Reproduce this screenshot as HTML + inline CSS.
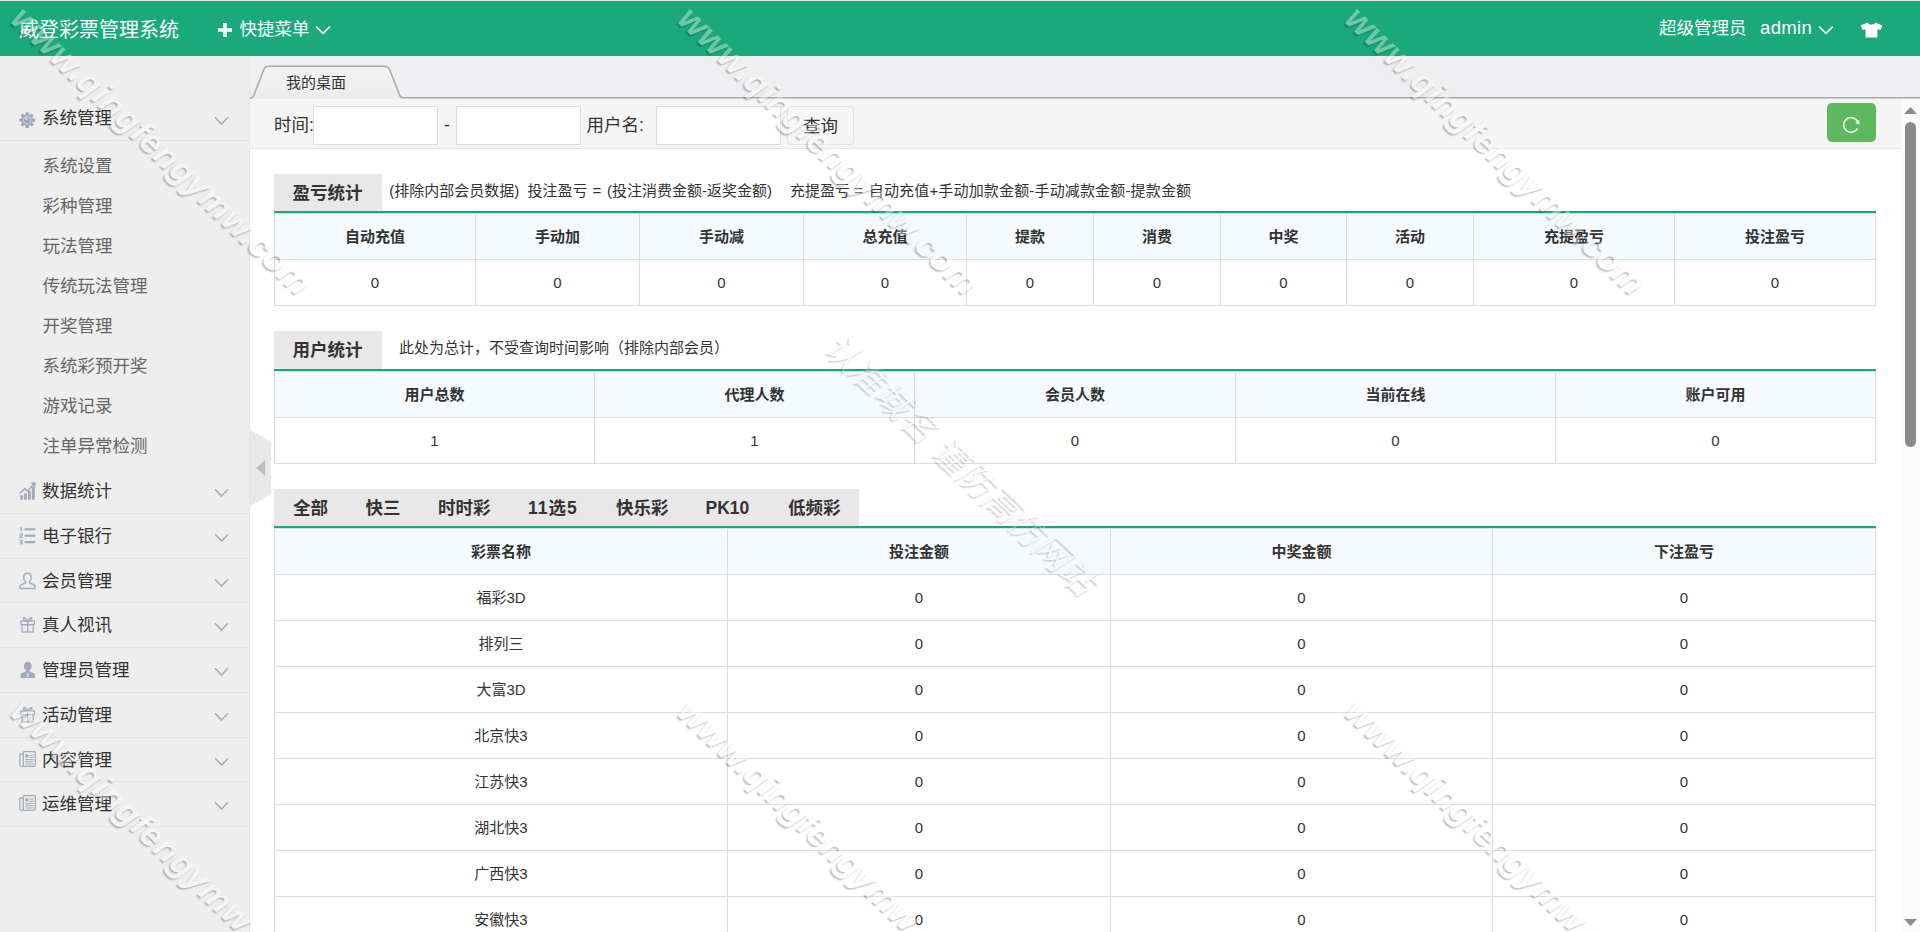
<!DOCTYPE html>
<html lang="zh-CN">
<head>
<meta charset="utf-8">
<title>威登彩票管理系统</title>
<style>
*{box-sizing:border-box;margin:0;padding:0}
html,body{width:1920px;height:932px;overflow:hidden;background:#fff}
body{font-family:"Liberation Sans","Noto Sans CJK SC",sans-serif;color:#333;font-size:17.5px;position:relative}
.abs{position:absolute}
#hdr{position:absolute;left:0;top:0;width:1920px;height:56px;background:#1aa97b;border-top:1px solid #e2e4e2}
#hdr .t{position:absolute;color:#fff;white-space:nowrap}
#side{position:absolute;left:0;top:56px;width:250px;height:876px;background:#eeeeee;border-right:1px solid #e5e5e5}
.dt{position:absolute;left:0;width:249px;height:44.75px;border-bottom:1px solid #e5e5e5;font-size:17.5px;line-height:44.5px;color:#333;padding-left:42px;white-space:nowrap}
.dt svg.ic{position:absolute;left:19px;top:13px}
.dt:first-child svg.ic{top:15.800px}
.dt:first-child svg.ch{top:20.300px}
.dt svg.ch{position:absolute;left:214.300px;top:19px}
.li{position:absolute;left:42.5px;font-size:17.5px;line-height:42px;height:40px;color:#666;white-space:nowrap}
#tabbar{position:absolute;left:250px;top:56px;width:1670px;height:43px;background:#efeef0}
#fbar{position:absolute;left:250px;top:99px;width:1651px;height:50px;background:#f5f5f5;border-bottom:1px solid #e5e5e5}
#fbar .lb{position:absolute;top:0;line-height:52px;font-size:17.5px;white-space:nowrap;color:#333}
#fbar .in{position:absolute;top:7px;height:39px;width:125px;background:#fff;border:1px solid #ddd}
#sb{position:absolute;left:1901px;top:99px;width:19px;height:833px;background:#fbfbfb}
.stab{position:absolute;background:#e8e8e8;font-weight:bold;font-size:17.5px;line-height:39.5px;height:37px;white-space:nowrap;color:#333}
.gl{position:absolute;left:274px;width:1602px;height:2px;background:#17a879}
.desc{position:absolute;font-size:15px;white-space:nowrap;color:#333;line-height:20px}
.c{position:absolute;border-right:1px solid #ddd;border-bottom:1px solid #ddd;text-align:center;font-size:15px;white-space:nowrap;color:#333}
.c.h{background:#f5fafe;font-weight:bold;border-top:1px solid #ddd}
.c.l{border-left:1px solid #ddd}
.wm{position:absolute;white-space:nowrap;font-style:italic;font-weight:bold;line-height:1;font-family:"Liberation Sans","Noto Sans CJK SC",sans-serif;color:#fff;opacity:.36;text-shadow:0 2px 1.5px rgba(0,0,0,.7);transform-origin:0 0;transform:rotate(43.7deg);pointer-events:none;z-index:50}
</style>
</head>
<body>
<div id="hdr">
<span class="t" style="left:19px;top:0.5px;line-height:56px;font-size:20px">威登彩票管理系统</span>
<svg class="abs" style="left:217px;top:21.200px" width="16" height="16" viewBox="0 0 16 16"><path d="M6.2 1h3.6v5.2H15v3.6H9.8V15H6.2V9.8H1V6.2h5.2z" fill="#fff"/></svg>
<span class="t" style="left:239.5px;top:0;line-height:56px;font-size:17.5px">快捷菜单</span>
<svg class="abs" style="left:315px;top:24.200px" width="16" height="10" viewBox="0 0 16 10"><path d="M1.2 1.6L8 8.4l6.8-6.8" fill="none" stroke="#fff" stroke-width="1.6"/></svg>
<span class="t" style="left:1659px;top:-1px;line-height:56px;font-size:17.5px">超级管理员</span>
<span class="t" style="left:1760px;top:-1px;line-height:56px;font-size:18.5px;letter-spacing:.35px">admin</span>
<svg class="abs" style="left:1818px;top:24.200px" width="16" height="10" viewBox="0 0 16 10"><path d="M1.2 1.6L8 8.4l6.8-6.8" fill="none" stroke="#fff" stroke-width="1.6"/></svg>
<svg class="abs" style="left:1860px;top:20.800px" width="23" height="16" preserveAspectRatio="none" viewBox="0 0 23 17"><path d="M7.6 .6c.9 1.6 2.3 2.4 3.9 2.4s3-.8 3.9-2.4L22.4 3.8 20.4 8.6l-3-1V16.4H5.6V7.6l-3 1L.6 3.8z" fill="#fff"/></svg>
</div>
<div id="side">
<div class="dt" style="top:40px"><svg class="ic" style="left:19.300px" width="16.400" height="16.200" viewBox="0 0 17 17"><g fill="#a2abbd"><circle cx="8.5" cy="8.5" r="6.1"/><rect x="6.700" y="0.200" width="3.600" height="16.600" rx=".9"/><rect x="0.200" y="6.700" width="16.600" height="3.600" rx=".9"/><g transform="rotate(45 8.5 8.5)"><rect x="6.700" y="0.200" width="3.600" height="16.600" rx=".9"/><rect x="0.200" y="6.700" width="16.600" height="3.600" rx=".9"/></g></g><circle cx="8.5" cy="8.5" r="4.1" fill="none" stroke="#eee" stroke-width=".7" opacity=".75"/><path d="M6.300 6.200a2.300 2.300 0 0 1 3 .3l-1.300 1.300-1.600.1z" fill="#eee" opacity=".8"/></svg>系统管理<svg class="ch" width="15" height="10" viewBox="0 0 15 10"><path d="M1 1.300l6.500 6.800 6.500-6.800" fill="none" stroke="#acacac" stroke-width="1.5"/></svg></div>
<div class="li" style="top:89.25px">系统设置</div>
<div class="li" style="top:129.25px">彩种管理</div>
<div class="li" style="top:169.25px">玩法管理</div>
<div class="li" style="top:209.25px">传统玩法管理</div>
<div class="li" style="top:249.25px">开奖管理</div>
<div class="li" style="top:289.25px">系统彩预开奖</div>
<div class="li" style="top:329.25px">游戏记录</div>
<div class="li" style="top:369.25px">注单异常检测</div>
<div class="dt" style="top:413.0px"><svg class="ic" width="17" height="18" viewBox="0 0 17 18"><g fill="#a2abbd"><rect x="1.200" y="13.300" width="2.900" height="4.400"/><rect x="5.100" y="11.300" width="2.900" height="6.400"/><rect x="9" y="8.800" width="2.900" height="8.900"/><rect x="12.900" y="5" width="2.900" height="12.700"/></g><path d="M.8 11.400l5-4.800 2.600 2.400 6-6.200" fill="none" stroke="#a2abbd" stroke-width="1.700"/><path d="M11.300 .6h5.200v5.200z" fill="#a2abbd"/></svg>数据统计<svg class="ch" width="15" height="10" viewBox="0 0 15 10"><path d="M1 1.300l6.500 6.800 6.500-6.800" fill="none" stroke="#acacac" stroke-width="1.5"/></svg></div>
<div class="dt" style="top:457.75px"><svg class="ic" width="17" height="18" viewBox="0 0 17 18"><g fill="#a2abbd"><rect x="5.5" y="1.2" width="11" height="2.2"/><rect x="5.5" y="7.6" width="11" height="2.2"/><rect x="5.5" y="14" width="11" height="2.2"/><rect x="1.6" y="0.5" width="1.3" height="4"/><rect x="0.6" y="0.5" width="2" height="1"/><rect x="0.6" y="6.5" width="3" height="1"/><rect x="2.4" y="6.5" width="1.2" height="2.4"/><rect x="0.6" y="8.4" width="3" height="1"/><rect x="0.6" y="8.4" width="1.2" height="2.4"/><rect x="0.6" y="10" width="3" height="1"/><rect x="0.6" y="12.8" width="3" height="1"/><rect x="2.4" y="12.8" width="1.2" height="4.4"/><rect x="0.6" y="14.6" width="3" height="1"/><rect x="0.6" y="16.3" width="3" height="1"/></g></svg>电子银行<svg class="ch" width="15" height="10" viewBox="0 0 15 10"><path d="M1 1.300l6.500 6.800 6.500-6.800" fill="none" stroke="#acacac" stroke-width="1.5"/></svg></div>
<div class="dt" style="top:502.5px"><svg class="ic" width="17" height="18" viewBox="0 0 17 18"><path d="M8.5 1.2c2.3 0 3.8 1.7 3.8 4.2 0 1.7-.8 3.3-1.9 4.2v1.2l4.3 1.8c.9.4 1.3 1.1 1.3 2v1.9H1V14.600c0-.9.4-1.600 1.300-2l4.300-1.800V9.600C5.500 8.700 4.700 7.100 4.700 5.400c0-2.500 1.500-4.200 3.800-4.200z" fill="none" stroke="#a2abbd" stroke-width="1.4" stroke-linejoin="round"/></svg>会员管理<svg class="ch" width="15" height="10" viewBox="0 0 15 10"><path d="M1 1.300l6.500 6.800 6.500-6.800" fill="none" stroke="#acacac" stroke-width="1.5"/></svg></div>
<div class="dt" style="top:547.25px"><svg class="ic" style="left:19.800px" width="15.400" height="17" viewBox="0 0 16 17" preserveAspectRatio="none"><g fill="none" stroke="#a2abbd" stroke-width="1.3"><rect x="1" y="5" width="14" height="3.6"/><rect x="2.2" y="8.600" width="11.600" height="7.400"/><path d="M8 5v11"/><path d="M8 5C6 1.500 3.800 .8 3.600 2.500 3.400 4.200 6 4.800 8 5zM8 5c2-3.500 4.200-4.200 4.400-2.500C12.600 4.200 10 4.800 8 5z"/></g></svg>真人视讯<svg class="ch" width="15" height="10" viewBox="0 0 15 10"><path d="M1 1.300l6.500 6.800 6.500-6.800" fill="none" stroke="#acacac" stroke-width="1.5"/></svg></div>
<div class="dt" style="top:592.0px"><svg class="ic" style="left:20px" width="15.500" height="18" viewBox="0 0 16 18" preserveAspectRatio="none"><path d="M8 .8c2.400 0 4 1.800 4 4.300 0 1.800-.8 3.400-2 4.300v1.200l4 1.500c1 .4 1.500 1.200 1.500 2.200v1.600c0 .6-.4 1-1 1H1.500c-.6 0-1-.4-1-1v-1.600c0-1 .5-1.800 1.500-2.200l4-1.500V9.400C4.800 8.500 4 6.900 4 5.100 4 2.600 5.600.8 8 .8z" fill="#a2abbd"/><path d="M7.400 12h1.200l.5 3.600L8 16.600l-1.100-1z" fill="#eee" opacity=".7"/></svg>管理员管理<svg class="ch" width="15" height="10" viewBox="0 0 15 10"><path d="M1 1.300l6.500 6.800 6.500-6.800" fill="none" stroke="#acacac" stroke-width="1.5"/></svg></div>
<div class="dt" style="top:636.75px"><svg class="ic" style="left:19.800px" width="15.400" height="17" viewBox="0 0 16 17" preserveAspectRatio="none"><g fill="none" stroke="#a2abbd" stroke-width="1.3"><rect x="1" y="5" width="14" height="3.6"/><rect x="2.2" y="8.600" width="11.600" height="7.400"/><path d="M8 5v11"/><path d="M8 5C6 1.500 3.800 .8 3.600 2.500 3.400 4.200 6 4.800 8 5zM8 5c2-3.500 4.200-4.200 4.400-2.500C12.600 4.200 10 4.800 8 5z"/></g></svg>活动管理<svg class="ch" width="15" height="10" viewBox="0 0 15 10"><path d="M1 1.300l6.500 6.800 6.500-6.800" fill="none" stroke="#acacac" stroke-width="1.5"/></svg></div>
<div class="dt" style="top:681.5px"><svg class="ic" width="17" height="16" viewBox="0 0 17 16"><g fill="none" stroke="#a2abbd" stroke-width="1.300"><path d="M4.300 3H1.800C1.200 3 .8 3.400.8 4v9.800c0 .8.600 1.500 1.500 1.500h12.400c.9 0 1.600-.7 1.600-1.600V1.600c0-.5-.4-.9-.9-.9H5.200c-.5 0-.9.400-.9.900v12.300c0 .8-.6 1.400-1.400 1.400"/><path d="M10.500 4.200h4M10.500 6.400h4M6.300 8.600h8.200M6.300 10.800h8.200M6.300 13h8.200" stroke-width="1"/></g><rect x="6.300" y="3.200" width="3" height="3.400" fill="#a2abbd"/></svg>内容管理<svg class="ch" width="15" height="10" viewBox="0 0 15 10"><path d="M1 1.300l6.500 6.800 6.500-6.800" fill="none" stroke="#acacac" stroke-width="1.5"/></svg></div>
<div class="dt" style="top:726.25px"><svg class="ic" width="17" height="16" viewBox="0 0 17 16"><g fill="none" stroke="#a2abbd" stroke-width="1.300"><path d="M4.300 3H1.800C1.200 3 .8 3.400.8 4v9.800c0 .8.600 1.500 1.500 1.500h12.400c.9 0 1.600-.7 1.600-1.600V1.600c0-.5-.4-.9-.9-.9H5.200c-.5 0-.9.400-.9.900v12.300c0 .8-.6 1.400-1.400 1.400"/><path d="M10.500 4.200h4M10.500 6.400h4M6.300 8.600h8.200M6.300 10.800h8.200M6.300 13h8.200" stroke-width="1"/></g><rect x="6.300" y="3.200" width="3" height="3.400" fill="#a2abbd"/></svg>运维管理<svg class="ch" width="15" height="10" viewBox="0 0 15 10"><path d="M1 1.300l6.500 6.800 6.500-6.800" fill="none" stroke="#acacac" stroke-width="1.5"/></svg></div>
</div>
<svg class="abs" style="left:250px;top:430px;z-index:5" width="22" height="76" viewBox="0 0 22 76"><path d="M0 0L19.500 10.500Q21.200 11.500 21.200 13.500V62.500Q21.200 64.500 19.500 65.500L0 76z" fill="#e9e9e9"/><path d="M6.200 38l9-8v16z" fill="#bdbdbd"/></svg>
<div id="tabbar">
<svg class="abs" style="left:0;top:0" width="1670" height="43" viewBox="0 0 1670 43"><defs><linearGradient id="tg" x1="0" y1="0" x2="0" y2="1"><stop offset="0" stop-color="#f3f3f3"/><stop offset="1" stop-color="#ececec"/></linearGradient></defs><path d="M0 42.300Q2.800 41.900 4 39L13.800 13.500C14.800 11 16.300 10.200 19.300 10.200H134C137 10.200 138.600 11 139.600 13.500L149.500 39Q150.600 41.700 153.300 41.700H1670V43H0z" fill="url(#tg)"/><path d="M0 42.300Q2.800 41.900 4 39L13.800 13.500C14.800 11 16.300 10.200 19.300 10.200H134C137 10.200 138.600 11 139.600 13.500L149.500 39Q150.600 41.700 153.300 41.700H1670" fill="none" stroke="#ababab" stroke-width="1.600"/></svg>
<span class="abs" style="left:36px;top:10px;line-height:33px;font-size:15px;color:#333;white-space:nowrap">我的桌面</span>
</div>
<div id="fbar">
<span class="lb" style="left:24px">时间:</span>
<span class="in" style="left:63px"></span>
<span class="lb" style="left:194px">-</span>
<span class="in" style="left:206px"></span>
<span class="lb" style="left:336.500px">用户名:</span>
<span class="in" style="left:406px"></span>
<span class="in" style="left:537px;width:67px;border-radius:4px;background:#f5f5f5;border-color:#e2e2e2;text-align:center;line-height:38px;font-size:17.5px;color:#333">查询</span>
<span class="abs" style="left:1577px;top:4px;width:49px;height:39px;background:#5eb95e;border-radius:5px"></span>
<svg class="abs" style="left:1591px;top:16px" width="20" height="20" viewBox="0 0 20 20"><path d="M16.500 13.200A7.300 7.300 0 1 1 16.900 7.600" fill="none" stroke="#fff" stroke-width="1.400"/><path d="M14.300 8.200l4.300 1.300-.6-4.400z" fill="#fff"/></svg>
</div>
<div id="sb">
<svg class="abs" style="left:0;top:0" width="19" height="833" viewBox="0 0 19 833"><path d="M3 15h13l-6.500-7z" fill="#8b8b8b"/><rect x="4" y="23" width="11" height="325" rx="5.500" fill="#8b8b8b"/><path d="M3 820h13l-6.500 7z" fill="#8b8b8b"/></svg>
</div>
<div class="stab" style="left:274px;top:174px;width:108px;padding-left:18.500px">盈亏统计</div>
<span class="desc" style="left:389.2px;top:180.5px">(排除内部会员数据)</span>
<span class="desc" style="left:527.5px;top:180.5px">投注盈亏</span>
<span class="desc" style="left:592.5px;top:180.5px">=</span>
<span class="desc" style="left:607px;top:180.5px">(投注消费金额-返奖金额)</span>
<span class="desc" style="left:790px;top:180.5px">充提盈亏</span>
<span class="desc" style="left:854px;top:180.5px">=</span>
<span class="desc" style="left:868.8px;top:180.5px;letter-spacing:.16px">自动充值+手动加款金额-手动减款金额-提款金额</span>
<div class="gl" style="top:211px"></div>
<div class="c h l" style="left:274px;top:213px;width:202px;height:47px;line-height:46px">自动充值</div>
<div class="c h" style="left:476px;top:213px;width:164px;height:47px;line-height:46px">手动加</div>
<div class="c h" style="left:640px;top:213px;width:164px;height:47px;line-height:46px">手动减</div>
<div class="c h" style="left:804px;top:213px;width:163px;height:47px;line-height:46px">总充值</div>
<div class="c h" style="left:967px;top:213px;width:127px;height:47px;line-height:46px">提款</div>
<div class="c h" style="left:1094px;top:213px;width:127px;height:47px;line-height:46px">消费</div>
<div class="c h" style="left:1221px;top:213px;width:126px;height:47px;line-height:46px">中奖</div>
<div class="c h" style="left:1347px;top:213px;width:127px;height:47px;line-height:46px">活动</div>
<div class="c h" style="left:1474px;top:213px;width:201px;height:47px;line-height:46px">充提盈亏</div>
<div class="c h" style="left:1675px;top:213px;width:201px;height:47px;line-height:46px">投注盈亏</div>
<div class="c l" style="left:274px;top:260px;width:202px;height:46px;line-height:46px">0</div>
<div class="c" style="left:476px;top:260px;width:164px;height:46px;line-height:46px">0</div>
<div class="c" style="left:640px;top:260px;width:164px;height:46px;line-height:46px">0</div>
<div class="c" style="left:804px;top:260px;width:163px;height:46px;line-height:46px">0</div>
<div class="c" style="left:967px;top:260px;width:127px;height:46px;line-height:46px">0</div>
<div class="c" style="left:1094px;top:260px;width:127px;height:46px;line-height:46px">0</div>
<div class="c" style="left:1221px;top:260px;width:126px;height:46px;line-height:46px">0</div>
<div class="c" style="left:1347px;top:260px;width:127px;height:46px;line-height:46px">0</div>
<div class="c" style="left:1474px;top:260px;width:201px;height:46px;line-height:46px">0</div>
<div class="c" style="left:1675px;top:260px;width:201px;height:46px;line-height:46px">0</div>
<div class="stab" style="left:274px;top:331px;height:38px;width:108px;padding-left:18.500px">用户统计</div>
<div class="desc" style="left:399px;top:337.5px">此处为总计，不受查询时间影响（排除内部会员）</div>
<div class="gl" style="top:369px"></div>
<div class="c h l" style="left:274px;top:371px;width:321px;height:47px;line-height:46px">用户总数</div>
<div class="c h" style="left:595px;top:371px;width:320px;height:47px;line-height:46px">代理人数</div>
<div class="c h" style="left:915px;top:371px;width:321px;height:47px;line-height:46px">会员人数</div>
<div class="c h" style="left:1236px;top:371px;width:320px;height:47px;line-height:46px">当前在线</div>
<div class="c h" style="left:1556px;top:371px;width:320px;height:47px;line-height:46px">账户可用</div>
<div class="c l" style="left:274px;top:418px;width:321px;height:46px;line-height:46px">1</div>
<div class="c" style="left:595px;top:418px;width:320px;height:46px;line-height:46px">1</div>
<div class="c" style="left:915px;top:418px;width:321px;height:46px;line-height:46px">0</div>
<div class="c" style="left:1236px;top:418px;width:320px;height:46px;line-height:46px">0</div>
<div class="c" style="left:1556px;top:418px;width:320px;height:46px;line-height:46px">0</div>
<div class="stab" style="left:274px;top:489px;width:585px"><span style="position:absolute;left:19px;top:0">全部</span><span style="position:absolute;left:91.5px;top:0">快三</span><span style="position:absolute;left:164px;top:0">时时彩</span><span style="position:absolute;left:254px;top:0;letter-spacing:1px">11选5</span><span style="position:absolute;left:342px;top:0">快乐彩</span><span style="position:absolute;left:431.5px;top:0">PK10</span><span style="position:absolute;left:514px;top:0">低频彩</span></div>
<div class="gl" style="top:526px"></div>
<div class="c h l" style="left:274px;top:528px;width:454px;height:47px;line-height:46px">彩票名称</div>
<div class="c h" style="left:728px;top:528px;width:383px;height:47px;line-height:46px">投注金额</div>
<div class="c h" style="left:1111px;top:528px;width:382px;height:47px;line-height:46px">中奖金额</div>
<div class="c h" style="left:1493px;top:528px;width:383px;height:47px;line-height:46px">下注盈亏</div>
<div class="c l" style="left:274px;top:575px;width:454px;height:46px;line-height:46px">福彩3D</div>
<div class="c" style="left:728px;top:575px;width:383px;height:46px;line-height:46px">0</div>
<div class="c" style="left:1111px;top:575px;width:382px;height:46px;line-height:46px">0</div>
<div class="c" style="left:1493px;top:575px;width:383px;height:46px;line-height:46px">0</div>
<div class="c l" style="left:274px;top:621px;width:454px;height:46px;line-height:46px">排列三</div>
<div class="c" style="left:728px;top:621px;width:383px;height:46px;line-height:46px">0</div>
<div class="c" style="left:1111px;top:621px;width:382px;height:46px;line-height:46px">0</div>
<div class="c" style="left:1493px;top:621px;width:383px;height:46px;line-height:46px">0</div>
<div class="c l" style="left:274px;top:667px;width:454px;height:46px;line-height:46px">大富3D</div>
<div class="c" style="left:728px;top:667px;width:383px;height:46px;line-height:46px">0</div>
<div class="c" style="left:1111px;top:667px;width:382px;height:46px;line-height:46px">0</div>
<div class="c" style="left:1493px;top:667px;width:383px;height:46px;line-height:46px">0</div>
<div class="c l" style="left:274px;top:713px;width:454px;height:46px;line-height:46px">北京快3</div>
<div class="c" style="left:728px;top:713px;width:383px;height:46px;line-height:46px">0</div>
<div class="c" style="left:1111px;top:713px;width:382px;height:46px;line-height:46px">0</div>
<div class="c" style="left:1493px;top:713px;width:383px;height:46px;line-height:46px">0</div>
<div class="c l" style="left:274px;top:759px;width:454px;height:46px;line-height:46px">江苏快3</div>
<div class="c" style="left:728px;top:759px;width:383px;height:46px;line-height:46px">0</div>
<div class="c" style="left:1111px;top:759px;width:382px;height:46px;line-height:46px">0</div>
<div class="c" style="left:1493px;top:759px;width:383px;height:46px;line-height:46px">0</div>
<div class="c l" style="left:274px;top:805px;width:454px;height:46px;line-height:46px">湖北快3</div>
<div class="c" style="left:728px;top:805px;width:383px;height:46px;line-height:46px">0</div>
<div class="c" style="left:1111px;top:805px;width:382px;height:46px;line-height:46px">0</div>
<div class="c" style="left:1493px;top:805px;width:383px;height:46px;line-height:46px">0</div>
<div class="c l" style="left:274px;top:851px;width:454px;height:46px;line-height:46px">广西快3</div>
<div class="c" style="left:728px;top:851px;width:383px;height:46px;line-height:46px">0</div>
<div class="c" style="left:1111px;top:851px;width:382px;height:46px;line-height:46px">0</div>
<div class="c" style="left:1493px;top:851px;width:383px;height:46px;line-height:46px">0</div>
<div class="c l" style="left:274px;top:897px;width:454px;height:46px;line-height:46px">安徽快3</div>
<div class="c" style="left:728px;top:897px;width:383px;height:46px;line-height:46px">0</div>
<div class="c" style="left:1111px;top:897px;width:382px;height:46px;line-height:46px">0</div>
<div class="c" style="left:1493px;top:897px;width:383px;height:46px;line-height:46px">0</div>
<div class="wm" style="left:29px;top:0px;font-size:34.5px;letter-spacing:.5px">www.qingfengymw.com</div>
<div class="wm" style="left:696px;top:0px;font-size:34.5px;letter-spacing:.5px">www.qingfengymw.com</div>
<div class="wm" style="left:1363px;top:0px;font-size:34.5px;letter-spacing:.5px">www.qingfengymw.com</div>
<div class="wm" style="left:29px;top:693px;font-size:34.5px;letter-spacing:.5px">www.qingfengymw.com</div>
<div class="wm" style="left:696px;top:693px;font-size:34.5px;letter-spacing:.5px">www.qingfengymw.com</div>
<div class="wm" style="left:1363px;top:693px;font-size:34.5px;letter-spacing:.5px">www.qingfengymw.com</div>
<div class="wm" style="left:842px;top:327px;font-size:35px;font-weight:300;opacity:.3">认准域名 谨防高仿网站</div>
</body>
</html>
